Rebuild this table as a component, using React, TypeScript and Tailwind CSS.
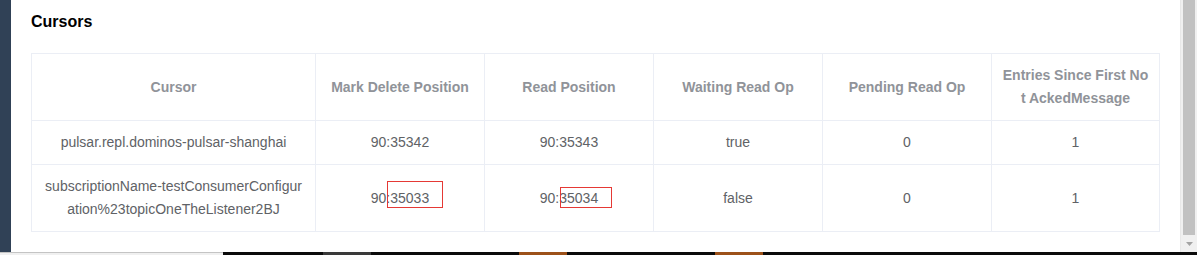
import React from 'react';

type CursorRow = {
  name: string;
  markDelete: string;
  readPos: string;
  waiting: string;
  pending: string;
  entries: string;
};

const rows: CursorRow[] = [
  {
    name: 'pulsar.repl.dominos-pulsar-shanghai',
    markDelete: '90:35342',
    readPos: '90:35343',
    waiting: 'true',
    pending: '0',
    entries: '1',
  },
  {
    name: 'subscriptionName-testConsumerConfiguration%23topicOneTheListener2BJ',
    markDelete: '90:35033',
    readPos: '90:35034',
    waiting: 'false',
    pending: '0',
    entries: '1',
  },
];

const headers = [
  'Cursor',
  'Mark Delete Position',
  'Read Position',
  'Waiting Read Op',
  'Pending Read Op',
  'Entries Since First Not AckedMessage',
];

const cell =
  'border border-[#ebeef5] px-[10px] py-[10px] text-center align-middle leading-[23px] break-all';

export default function App() {
  return (
    <div
      className="flex h-[255px] w-[1197px] flex-col overflow-hidden bg-white"
      style={{ fontFamily: '"Liberation Sans", Arial, sans-serif' }}
    >
      <div className="flex h-[252px]">
        {/* sidebar edge */}
        <div className="w-[11px] shrink-0 bg-[#304156]" />

        {/* panel */}
        <div className="flex-1 pl-[20px] pt-[10px]">
          <h3 className="text-[16px] font-bold leading-6 text-black">Cursors</h3>

          <div className="relative mt-[19px] w-[1128px]">
            <table className="w-[1128px] table-fixed border-collapse border border-[#ebeef5] text-[14px]">
              <colgroup>
                <col className="w-[284px]" />
                <col className="w-[169px]" />
                <col className="w-[169px]" />
                <col className="w-[169px]" />
                <col className="w-[169px]" />
                <col className="w-[168px]" />
              </colgroup>
              <thead>
                <tr>
                  {headers.map((h) => (
                    <th key={h} className={`${cell} font-bold text-[#909399]`}>
                      {h}
                    </th>
                  ))}
                </tr>
              </thead>
              <tbody className="text-[#606266]">
                {rows.map((r) => (
                  <tr key={r.name}>
                    <td className={cell}>{r.name}</td>
                    <td className={cell}>{r.markDelete}</td>
                    <td className={cell}>{r.readPos}</td>
                    <td className={cell}>{r.waiting}</td>
                    <td className={cell}>{r.pending}</td>
                    <td className={cell}>{r.entries}</td>
                  </tr>
                ))}
              </tbody>
            </table>

            {/* red annotation boxes */}
            <div className="absolute left-[356px] top-[128px] h-[27px] w-[56px] border border-[#e53935]" />
            <div className="absolute left-[529px] top-[134px] h-[21px] w-[52px] border border-[#e53935]" />
          </div>
        </div>

        {/* scrollbar */}
        <div className="flex w-[17px] shrink-0 flex-col border-l border-[#e8e8e8] bg-[#f0f0f0]">
          <div className="mx-[2px] h-[235px] bg-[#c1c1c1]" />
          <div className="flex flex-1 items-center justify-center">
            <svg width="7" height="4" viewBox="0 0 7 4">
              <path d="M0 0H7L3.5 4Z" fill="#a3a3a3" />
            </svg>
          </div>
        </div>
      </div>

      {/* bottom strip */}
      <div className="flex h-[3px]">
        <div className="w-[223px] border-t border-[#c4c4c4] bg-[#f0f0f0]" />
        <div className="w-[100px] bg-[#0b0b0b]" />
        <div className="w-[48px] bg-[#3a3a3a]" />
        <div className="w-[148px] bg-[#0b0b0b]" />
        <div className="w-[48px] bg-[#9c5119]" />
        <div className="w-[148px] bg-[#0b0b0b]" />
        <div className="w-[48px] bg-[#9c5119]" />
        <div className="flex-1 bg-[#0b0b0b]" />
      </div>
    </div>
  );
}
